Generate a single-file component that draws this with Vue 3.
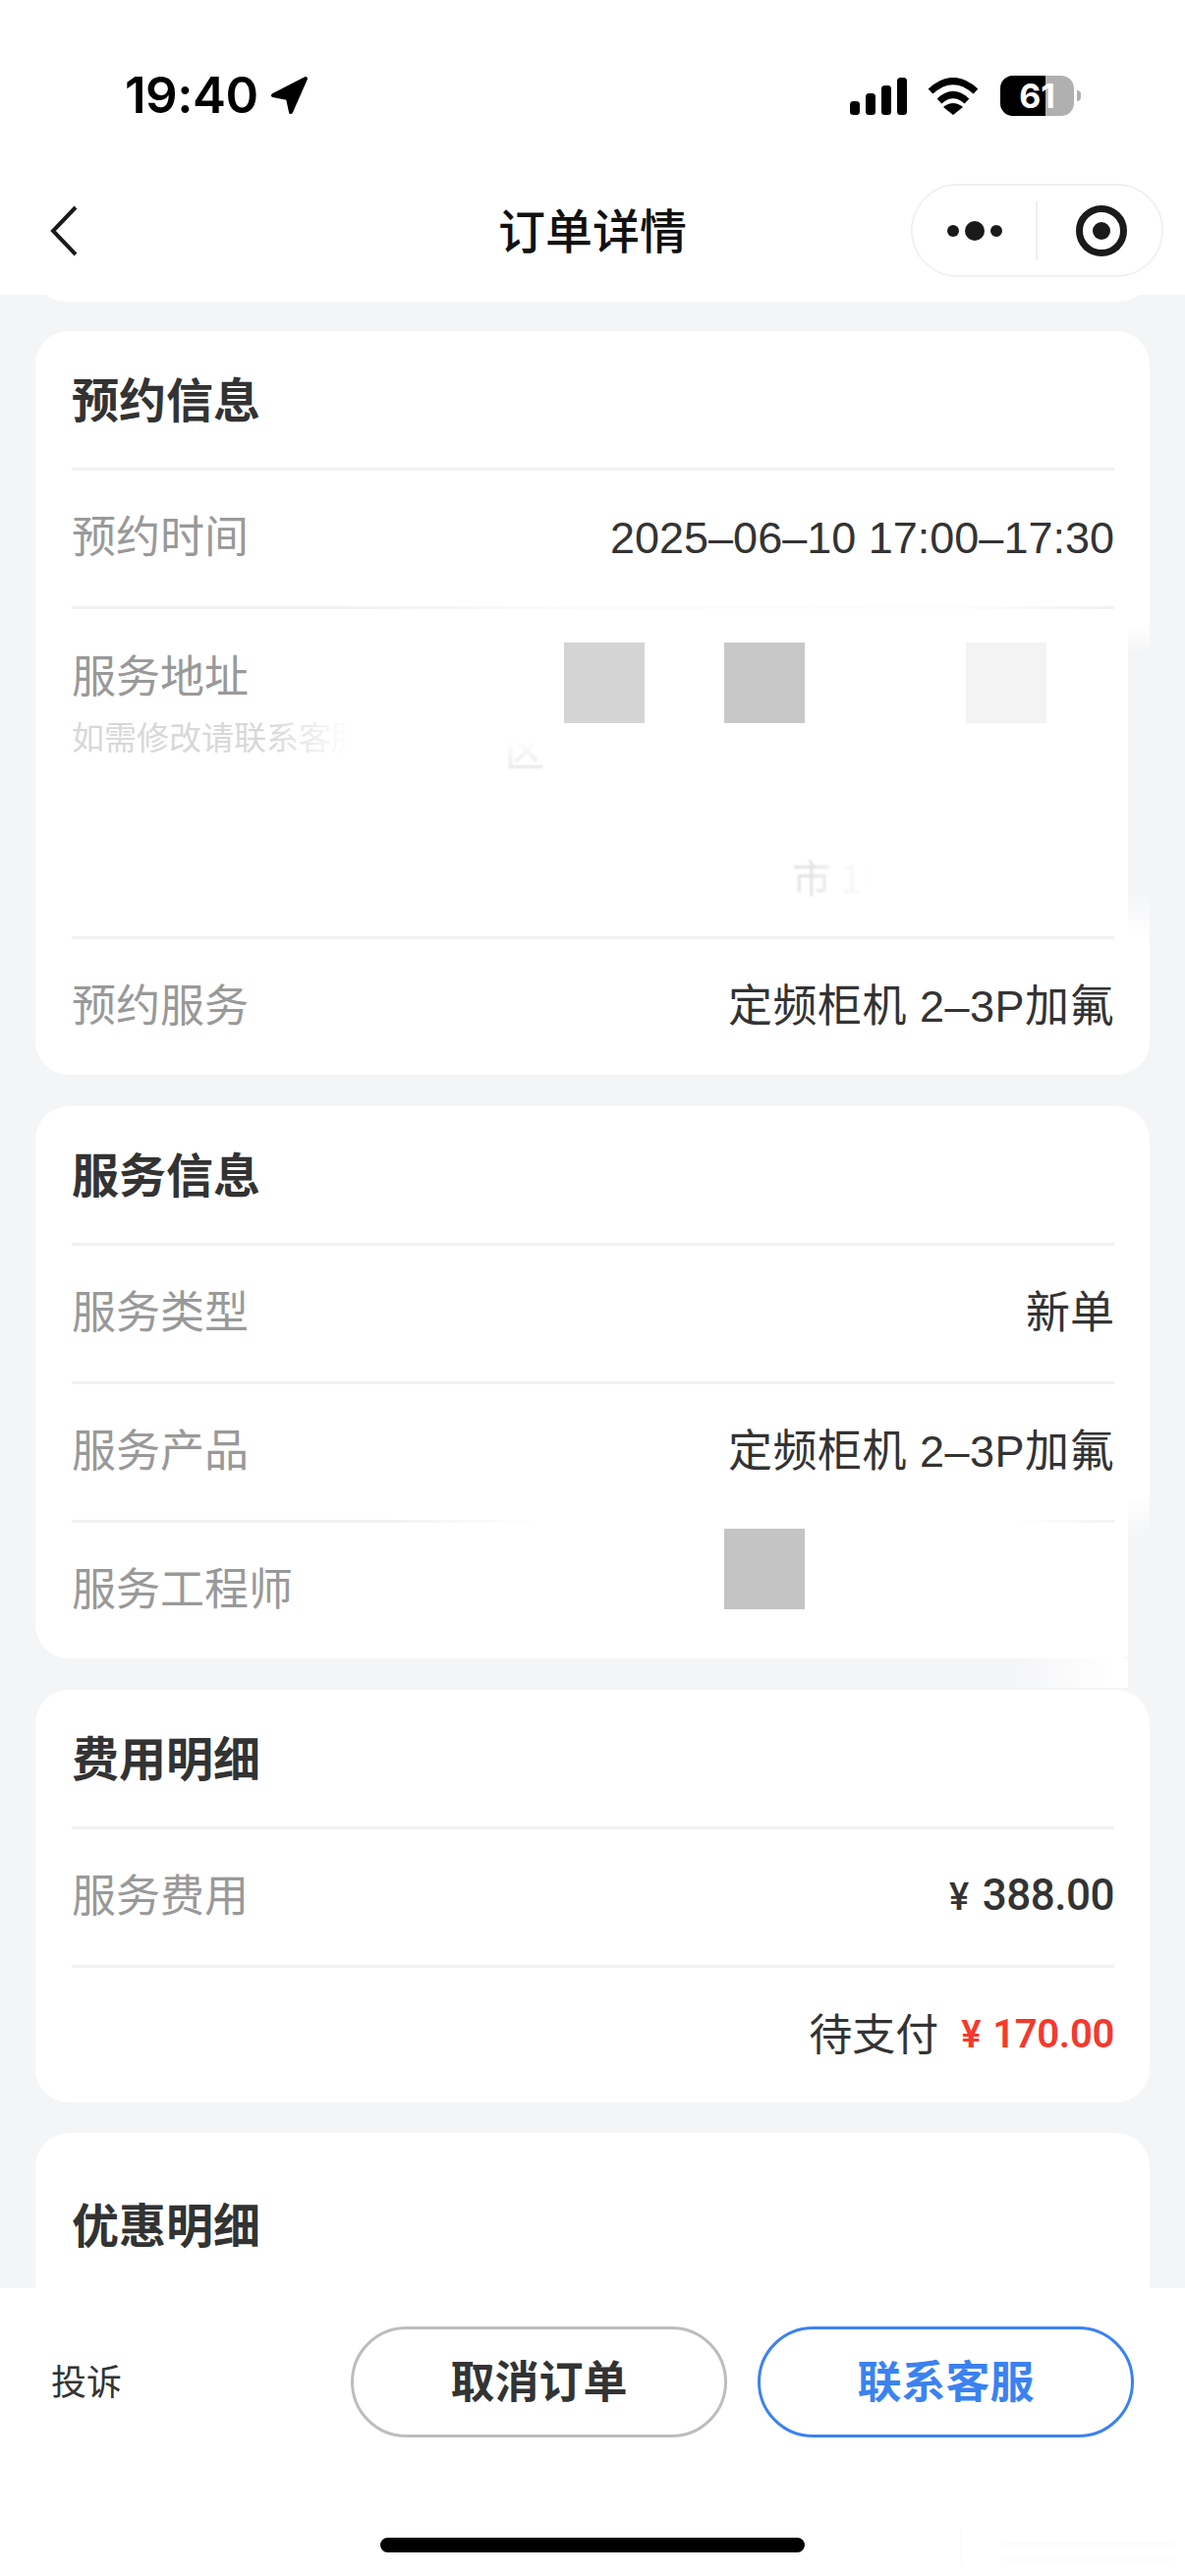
<template>
  <div class="page">
    <header class="header">
      <div class="status">
        <div class="status-left">
          <span class="time">19:40</span>
          <svg class="arrow" viewBox="0 0 40 40">
            <path d="M36 3 L3 20 L18 23 L21 37 Z" fill="#000" stroke="#000" stroke-width="4" stroke-linejoin="round" />
          </svg>
        </div>
        <div class="status-right">
          <svg class="signal" viewBox="0 0 58 38">
            <rect x="0" y="24" width="10" height="14" rx="3.5" />
            <rect x="16" y="16" width="10" height="22" rx="3.5" />
            <rect x="32" y="8" width="10" height="30" rx="3.5" />
            <rect x="48" y="0" width="10" height="38" rx="3.5" />
          </svg>
          <svg class="wifi" viewBox="0 0 52 38">
            <path d="M3 14 Q26 -7 49 14" fill="none" stroke="#000" stroke-width="7" />
            <path d="M12 24 Q26 11 40 24" fill="none" stroke="#000" stroke-width="7" />
            <path d="M16 30 Q26 22 36 30 L26 38 Z" fill="#000" />
          </svg>
          <div class="battery">
            <div class="battery-level"></div>
            <span class="battery-text">61</span>
          </div>
          <div class="battery-nub"></div>
        </div>
      </div>
      <div class="nav">
        <svg class="back" viewBox="0 0 30 52">
          <path d="M27 2 L4 26 L27 50" fill="none" stroke="#1a1a1a" stroke-width="4" />
        </svg>
        <div class="nav-title">订单详情</div>
        <div class="capsule">
          <div class="capsule-more">
            <svg class="more" viewBox="0 0 56 20">
              <circle cx="6" cy="10" r="6" />
              <circle cx="28" cy="10" r="10" />
              <circle cx="50" cy="10" r="6" />
            </svg>
          </div>
          <div class="capsule-close">
            <svg class="target" viewBox="0 0 52 52">
              <circle cx="26" cy="26" r="22.5" fill="none" stroke="#1a1a1a" stroke-width="7" />
              <circle cx="26" cy="26" r="9" fill="#1a1a1a" />
            </svg>
          </div>
        </div>
      </div>
    </header>

    <main class="content">
      <div class="card card-stub"></div>

      <section class="card">
        <div class="card-head">预约信息</div>
        <div class="row">
          <span class="label">预约时间</span>
          <span class="value">2025–06–10 17:00–17:30</span>
        </div>
        <div class="row row-address">
          <div class="address-left">
            <div class="label">服务地址</div>
            <div class="hint">如需修改请联系客服</div>
          </div>
          <div class="hint-fade"></div>
          <div class="line-fade"></div>
          <div class="redact r1"></div>
          <div class="redact r2"></div>
          <div class="redact r3"></div>
          <span class="ghost ghost-qu">区</span>
          <span class="ghost ghost-shi">市 10</span>
        </div>
        <div class="row row-last">
          <span class="label">预约服务</span>
          <span class="value value-wide">定频柜机 2–3P加氟</span>
        </div>
        <div class="edge edge-a"></div>
      </section>

      <section class="card">
        <div class="card-head">服务信息</div>
        <div class="row">
          <span class="label">服务类型</span>
          <span class="value">新单</span>
        </div>
        <div class="row">
          <span class="label">服务产品</span>
          <span class="value value-wide">定频柜机 2–3P加氟</span>
        </div>
        <div class="row row-last">
          <span class="label">服务工程师</span>
          <div class="line-fade line-fade-short"></div>
          <div class="redact r4"></div>
        </div>
        <div class="edge edge-b"></div>
        <div class="smear"></div>
      </section>

      <section class="card card-fee">
        <div class="card-head">费用明细</div>
        <div class="row">
          <span class="label">服务费用</span>
          <span class="amount"><i class="yen">¥</i>388.00</span>
        </div>
        <div class="row row-pay">
          <span class="pay-label">待支付</span>
          <span class="pay"><i class="yen-red">¥</i>170.00</span>
        </div>
      </section>

      <section class="card card-last">
        <div class="card-head">优惠明细</div>
      </section>
    </main>

    <footer class="bottom">
      <div class="actions">
        <span class="complain">投诉</span>
        <button class="btn btn-gray">取消订单</button>
        <button class="btn btn-blue">联系客服</button>
      </div>
      <div class="home-bar"></div>
      <div class="trace trace-v"></div>
      <div class="trace trace-h1"></div>
      <div class="trace trace-h2"></div>
    </footer>
  </div>
</template>

<script setup>
</script>

<style>
html, body {
  margin: 0;
  background: #fff;
}
</style>

<style scoped>
.page {
  width: 1206px;
  height: 2622px;
  display: flex;
  flex-direction: column;
  overflow: hidden;
  background: #f4f5f7;
  font-family: "Noto Sans CJK SC", "Liberation Sans", sans-serif;
  color: #333;
}

.header {
  position: relative;
  z-index: 2;
  height: 300px;
  flex: none;
  background: #fff;
}

.status {
  height: 187px;
  box-sizing: border-box;
  padding: 77px 106px 0 127px;
  display: flex;
  justify-content: space-between;
  align-items: flex-start;
}

.status-left {
  display: flex;
  align-items: center;
  height: 40px;
  gap: 12px;
}

.time {
  font-family: Inter, sans-serif;
  font-size: 51px;
  font-weight: 600;
  line-height: 40px;
  color: #000;
  letter-spacing: -0.5px;
}

.arrow {
  width: 40px;
  height: 40px;
}

.status-right {
  display: flex;
  align-items: center;
  height: 41px;
}

.signal {
  width: 58px;
  height: 38px;
  fill: #000;
}

.wifi {
  width: 52px;
  height: 38px;
  margin-left: 21px;
}

.battery {
  position: relative;
  width: 75px;
  height: 41px;
  margin-left: 22px;
  border-radius: 13px;
  overflow: hidden;
  background: #b0b0b0;
  display: flex;
  align-items: center;
  justify-content: center;
}

.battery-level {
  position: absolute;
  left: 0;
  top: 0;
  bottom: 0;
  width: 46px;
  background: #000;
}

.battery-text {
  position: relative;
  font-family: Inter, sans-serif;
  font-size: 34px;
  font-weight: 700;
  color: #fff;
}

.battery-nub {
  width: 4px;
  height: 11px;
  margin-left: 3px;
  border-radius: 0 4px 4px 0;
  background: #b0b0b0;
}

.nav {
  height: 95px;
  display: grid;
  grid-template-columns: 257px auto 257px;
  justify-content: space-between;
  align-items: center;
  padding: 0 22px;
}

.back {
  width: 30px;
  height: 52px;
  margin-left: 28px;
}

.nav-title {
  font-size: 48px;
  font-weight: 500;
  color: #111;
  line-height: 90px;
  padding-bottom: 5px;
}

.capsule {
  width: 257px;
  height: 95px;
  box-sizing: border-box;
  border: 2px solid #f1f1f1;
  border-radius: 48px;
  display: flex;
  align-items: center;
}

.capsule-more {
  width: 127px;
  height: 60px;
  box-sizing: border-box;
  border-right: 2px solid #eee;
  display: flex;
  align-items: center;
  justify-content: center;
  padding-left: 2px;
}

.more {
  width: 56px;
  height: 20px;
  fill: #1a1a1a;
}

.capsule-close {
  flex: 1;
  display: flex;
  justify-content: center;
  padding-left: 4px;
}

.target {
  width: 52px;
  height: 52px;
}

.content {
  flex: 1;
  min-height: 0;
  overflow: hidden;
  padding: 0 36px;
  display: flex;
  flex-direction: column;
  gap: 32px;
}

.card {
  position: relative;
  flex: none;
  background: #fff;
  border-radius: 34px;
}

.card-stub {
  height: 60px;
  margin-top: -53px;
  margin-bottom: -2px;
}

.card-head {
  height: 139px;
  box-sizing: border-box;
  padding-bottom: 6px;
  margin: 0 37px;
  display: flex;
  align-items: center;
  font-size: 48px;
  font-weight: 700;
  line-height: 1;
  color: #333;
}

.row {
  position: relative;
  height: 141px;
  box-sizing: border-box;
  padding-bottom: 8px;
  margin: 0 36px 0 37px;
  border-top: 3px solid #f1f1f1;
  display: flex;
  align-items: center;
  justify-content: space-between;
}

.row-last {
  height: 141px;
}

.label {
  font-size: 45px;
  line-height: 1.2;
  color: #999;
}

.value {
  font-family: "Liberation Sans", "Noto Sans CJK SC", sans-serif;
  font-size: 45px;
  line-height: 1.2;
  color: #333;
  padding-top: 7px;
}

.value-wide {
  letter-spacing: 0.5px;
}

.row-address {
  height: 336px;
  padding-bottom: 0;
  align-items: flex-start;
  border-top-color: transparent;
}

.address-left {
  padding-top: 39px;
}

.hint {
  margin-top: 17px;
  font-size: 33px;
  line-height: 1.2;
  color: #d8d8d8;
  white-space: nowrap;
}

.hint-fade {
  position: absolute;
  left: 200px;
  top: 100px;
  width: 110px;
  height: 60px;
  background: linear-gradient(90deg, rgba(255, 255, 255, 0), #fff 75%);
}

.line-fade {
  position: absolute;
  left: 0;
  right: 0;
  top: -3px;
  height: 3px;
  background: linear-gradient(90deg, #f1f1f1 25%, #fbfbfb 50%, #fdfdfd 85%, #f1f1f1 100%);
}

.line-fade-short {
  background: linear-gradient(90deg, #f1f1f1 30%, #fff 45%, #fff 90%, #f3f3f3 100%);
}

.redact {
  position: absolute;
  width: 82px;
}

.r1 {
  left: 501px;
  top: 34px;
  height: 82px;
  background: #d4d4d4;
}

.r2 {
  left: 664px;
  top: 34px;
  height: 82px;
  background: #c8c8c8;
}

.r3 {
  left: 910px;
  top: 34px;
  height: 82px;
  background: #f3f3f3;
}

.r4 {
  left: 664px;
  top: 6px;
  height: 82px;
  background: #c4c4c4;
}

.ghost {
  position: absolute;
  font-size: 40px;
  line-height: 1;
  color: transparent;
  background-clip: text;
  -webkit-background-clip: text;
  white-space: nowrap;
  filter: blur(0.8px);
}

.ghost-qu {
  left: 441px;
  top: 122px;
  background-image: linear-gradient(180deg, #fff 25%, #e6e6e6 100%);
}

.ghost-shi {
  left: 733px;
  top: 252px;
  background-image: linear-gradient(90deg, #e2e2e2 20%, #fff 85%);
}

.edge {
  position: absolute;
  right: 0;
  width: 22px;
  background: #f4f5f7;
}

.edge-a {
  top: 300px;
  height: 320px;
  background: linear-gradient(180deg, rgba(244, 245, 247, 0), #f4f5f7 9%, #f4f5f7 84%, rgba(244, 245, 247, 0));
}

.edge-b {
  top: 398px;
  bottom: 0;
  background: linear-gradient(180deg, rgba(244, 245, 247, 0), #f4f5f7 24%);
}

.smear {
  position: absolute;
  right: 22px;
  top: 100%;
  width: 120px;
  height: 30px;
  background: linear-gradient(90deg, rgba(255, 255, 255, 0), #fff 90%);
}

.card-fee .row-pay {
  height: 140px;
  padding-bottom: 6px;
  justify-content: flex-end;
  align-items: center;
}

.amount {
  font-family: Roboto, sans-serif;
  font-size: 44px;
  font-weight: 500;
  color: #333;
  letter-spacing: -0.5px;
  padding-top: 3px;
}

.yen {
  font-style: normal;
  font-size: 38px;
  margin-right: 14px;
}

.pay-label {
  font-size: 44px;
  line-height: 1.2;
  color: #333;
  margin-right: 23px;
}

.pay {
  font-family: Roboto, sans-serif;
  font-size: 40px;
  font-weight: 600;
  color: #f4392d;
  letter-spacing: -0.3px;
  padding-top: 4px;
}

.yen-red {
  font-style: normal;
  font-size: 38px;
  margin-right: 12px;
}

.card-last {
  height: 300px;
  margin-top: -1px;
}

.card-last .card-head {
  height: 188px;
}

.bottom {
  flex: none;
  position: relative;
  z-index: 2;
  height: 293px;
  box-sizing: border-box;
  padding-top: 39px;
  background: #fff;
}

.actions {
  display: flex;
  align-items: center;
  padding: 0 52px;
  gap: 31px;
}

.complain {
  margin-right: auto;
  padding-bottom: 6px;
  font-size: 36px;
  color: #333;
}

.btn {
  width: 383px;
  height: 113px;
  box-sizing: border-box;
  background: #fff;
  border-radius: 57px;
  font-family: inherit;
  font-size: 45px;
  font-weight: 700;
  padding: 0 0 6px;
}

.btn-gray {
  border: 3px solid #bdbdbd;
  color: #333;
}

.btn-blue {
  border: 3px solid #3b82f0;
  color: #3b82f0;
}

.home-bar {
  width: 432px;
  height: 15px;
  margin: 102px auto 0;
  border-radius: 8px;
  background: #000;
}

.trace {
  position: absolute;
  background: #fcfcfc;
}

.trace-v {
  left: 977px;
  top: 244px;
  width: 3px;
  height: 37px;
}

.trace-h1 {
  left: 1020px;
  top: 258px;
  width: 175px;
  height: 5px;
}

.trace-h2 {
  left: 1020px;
  top: 273px;
  width: 175px;
  height: 5px;
}
</style>
